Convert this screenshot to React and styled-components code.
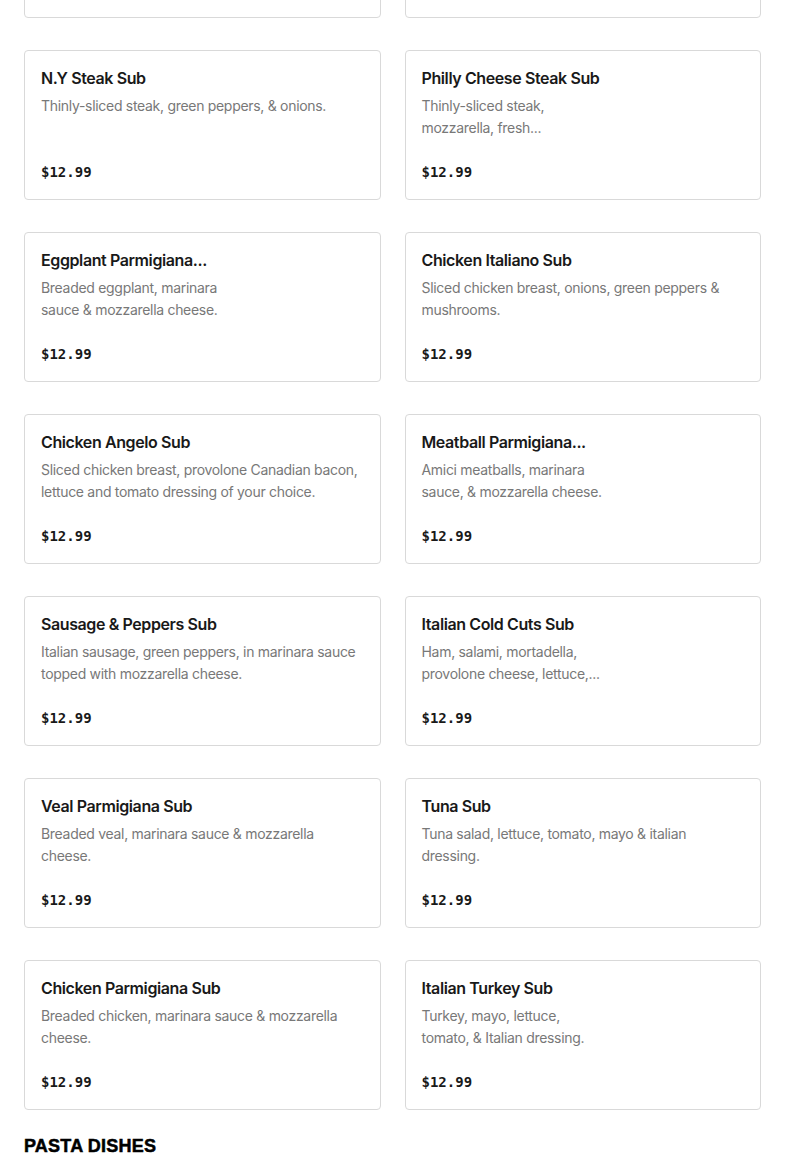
import React from "react";
import styled, { createGlobalStyle } from "styled-components";

const GlobalStyle = createGlobalStyle`
  html, body { margin: 0; padding: 0; background: #ffffff; }
  body { font-family: "Inter", "Liberation Sans", sans-serif; -webkit-font-smoothing: antialiased; }
  * { box-sizing: border-box; }
`;

const Viewport = styled.div`
  height: 1161px;
  overflow: hidden;
  padding: 0 24px;
`;

const Grid = styled.div`
  display: grid;
  grid-template-columns: minmax(0, 1fr) minmax(0, 1fr);
  column-gap: 24px;
  row-gap: 32px;
  margin-top: ${(p) => p.$offset}px;
`;

const Card = styled.div`
  height: 150px;
  border: 1px solid #d9d9d9;
  border-radius: 4px;
  padding: 16px 16px 17px;
  display: flex;
  flex-direction: column;
  background: #fff;
  overflow: hidden;
`;

const Title = styled.div`
  font-family: "Inter", "Liberation Sans", sans-serif;
  font-size: 16px;
  font-weight: 600;
  line-height: 22px;
  letter-spacing: -0.4px;
  color: #191919;
  white-space: nowrap;
`;

const Desc = styled.div`
  margin-top: 6px;
  font-family: "Inter", "Liberation Sans", sans-serif;
  font-size: 14px;
  line-height: 22px;
  letter-spacing: -0.3px;
  color: #787878;
`;

const Line = styled.span`
  display: block;
  white-space: nowrap;
`;

const Price = styled.div`
  margin-top: auto;
  font-family: "DejaVu Sans Mono", "Liberation Mono", monospace;
  font-size: 14px;
  font-weight: 700;
  line-height: 20px;
  color: #191919;
`;

const Heading = styled.h2`
  margin: 24px 0 0;
  font-family: "Liberation Sans", "Arial", sans-serif;
  font-size: 18px;
  font-weight: 900;
  line-height: 24px;
  color: #000;
  letter-spacing: 0.2px;
  -webkit-text-stroke: 0.5px #000;
`;

const items = [
  { title: "Steak & Cheese Sub", lines: ["Thinly-sliced steak & provolone cheese."] },
  { title: "Grilled Chicken Sub", lines: ["Grilled chicken, lettuce, tomato & mayo."] },
  { title: "N.Y Steak Sub", lines: ["Thinly-sliced steak, green peppers, & onions."] },
  { title: "Philly Cheese Steak Sub", lines: ["Thinly-sliced steak,", "mozzarella, fresh..."] },
  { title: "Eggplant Parmigiana...", lines: ["Breaded eggplant, marinara", "sauce & mozzarella cheese."] },
  { title: "Chicken Italiano Sub", lines: ["Sliced chicken breast, onions, green peppers &", "mushrooms."] },
  { title: "Chicken Angelo Sub", lines: ["Sliced chicken breast, provolone Canadian bacon,", "lettuce and tomato dressing of your choice."] },
  { title: "Meatball Parmigiana...", lines: ["Amici meatballs, marinara", "sauce, & mozzarella cheese."] },
  { title: "Sausage & Peppers Sub", lines: ["Italian sausage, green peppers, in marinara sauce", "topped with mozzarella cheese."] },
  { title: "Italian Cold Cuts Sub", lines: ["Ham, salami, mortadella,", "provolone cheese, lettuce,..."] },
  { title: "Veal Parmigiana Sub", lines: ["Breaded veal, marinara sauce & mozzarella", "cheese."] },
  { title: "Tuna Sub", lines: ["Tuna salad, lettuce, tomato, mayo & italian", "dressing."] },
  { title: "Chicken Parmigiana Sub", lines: ["Breaded chicken, marinara sauce & mozzarella", "cheese."] },
  { title: "Italian Turkey Sub", lines: ["Turkey, mayo, lettuce,", "tomato, & Italian dressing."] },
];

export default function App() {
  return (
    <>
      <GlobalStyle />
      <Viewport>
        <Grid $offset={-132}>
          {items.map((it, i) => (
            <Card key={i}>
              <Title>{it.title}</Title>
              <Desc>
                {it.lines.map((l, j) => (
                  <Line key={j}>{l}</Line>
                ))}
              </Desc>
              <Price>$12.99</Price>
            </Card>
          ))}
        </Grid>
        <Heading>PASTA DISHES</Heading>
      </Viewport>
    </>
  );
}
